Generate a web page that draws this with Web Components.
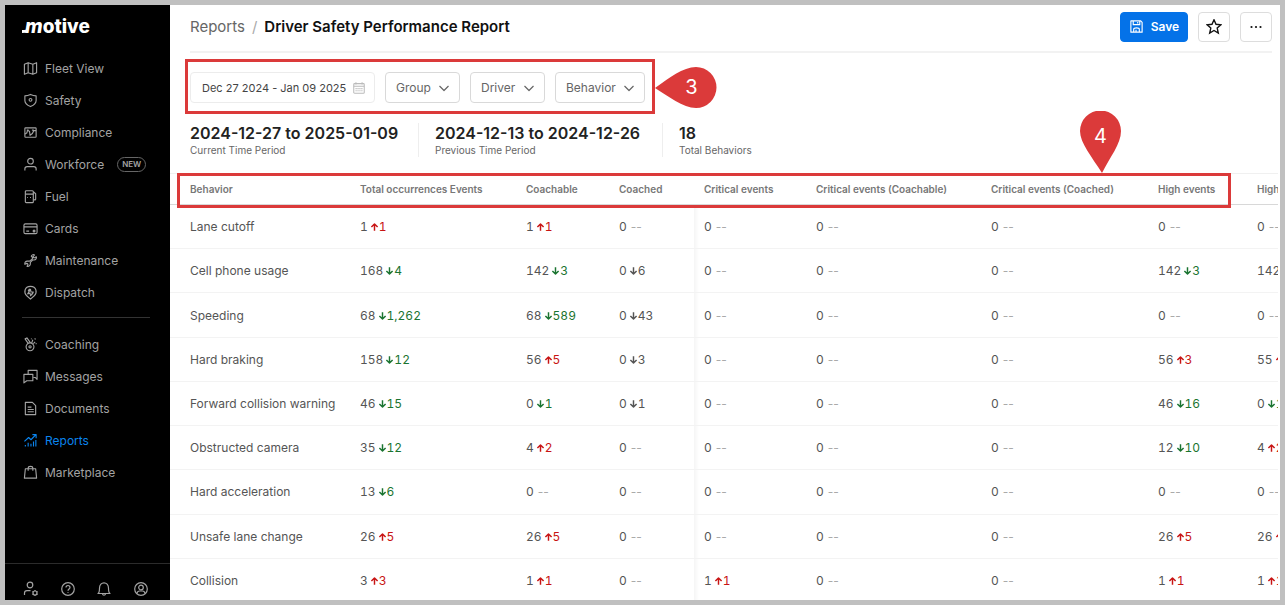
<!DOCTYPE html>
<html lang="en">
<head>
<meta charset="utf-8">
<title>Driver Safety Performance Report</title>
<style>
  html, body { height: 100%; }
  body { margin: 0; background: #c0c0c0; font-family: Inter, "Liberation Sans", sans-serif; color: #444; overflow: hidden; }
</style>
</head>
<body>
<report-app></report-app>
<script>
const ICONS = {
  map: '<path d="M1.5 3.5l4-1.700 5 1.700 4-1.700v10.700l-4 1.700-5-1.700-4 1.700zM5.500 1.800v10.700M10.500 3.500v10.700"/>',
  shield: '<path d="M8 1.500c2 1 4 1.500 6 1.500v5c0 3-2.500 5-6 6.500C4.500 13 2 11 2 8V3c2 0 4-.5 6-1.500z"/><circle cx="8" cy="7.300" r="1.500"/>',
  compliance: '<rect x="2" y="3" width="12" height="10" rx=".8"/><path d="M2 9.500l2-1 1-3 2 1.500 .5 4 2.500-2 1.500-3L14 6M4 5.500h2M9.500 5.500h2"/>',
  person: '<circle cx="8" cy="4.500" r="3"/><path d="M2 14.500v-2c0-1.500 1-2.300 2.500-2.300h7c1.500 0 2.500.8 2.500 2.300v2"/>',
  fuel: '<rect x="2.500" y="1.800" width="8.500" height="12.700" rx="1"/><path d="M2.500 5.500H11M4.500 9h.8M7.500 9h1M11 3l2.500 2v6c0 .8-1 1-1.300.5L11 11"/>',
  card: '<rect x="1" y="3" width="14" height="10.500" rx="1.500"/><path d="M1 6.300h14M3.500 10.800h3"/><circle cx="11.800" cy="10.600" r="1" fill="currentColor"/>',
  wrench: '<path d="M10 6.200V4.500L8.800 3.400C9.800 1.800 11.500 1.500 12.300 2L10.900 3.600l.2 1.300 1.300.2L14.200 4c.5 1.500-.5 3.500-2.500 3.500h-1.500L7.800 10v2c-.2 1.800-2 2.700-3.500 2.200l1-1.700-.4-1.200-1.400-.2-1.400 1C1.500 10 3 8.400 5 8.700h2z"/>',
  dispatch: '<path d="M8 15L4 11.500C.5 8 1.500 1.500 8 1.500S15.500 8 12 11.500z"/><path d="M5 9.500L8 4.500l.5 3h2.500l-3 4-.5-3zM5.500 6.500L7 4M9 11l2-3"/>',
  medal: '<circle cx="7.500" cy="10.500" r="4.200"/><circle cx="7.500" cy="10.500" r="1.200"/><path d="M5.500 6.800L2.200 2l2-1L8 6.200M9.200 6.500L10.500 3M11 7l2-1.800M12.500 1.500l.8 1.200M14.500 7h-1M9 1.500v1"/>',
  chat: '<path d="M5.500 5.500v-4h9.500v9.500l-2-2h-2"/><path d="M1 5.700h9.500v6.800H4L1 14.800z"/>',
  doc: '<path d="M2.500 1.500h7.500l3.500 3.500v9.500h-11zM5 6.500h4M5 9h6.500M5 11.500h6.500"/>',
  chart: '<path d="M1.500 9L6 4.800l2.500 2.400L13.500 2M10 1.700h4v4M2.500 14.500v-1.800M5.500 14.500v-4M8.500 14.500v-3M11.200 14.500V9M13.700 14.500V7.500"/>',
  bag: '<path d="M2.500 4h11l1 10h-13zM5.500 6V3.500c0-2.700 5-2.700 5 0V6"/>',
  usercog: '<circle cx="7" cy="4" r="2.800"/><path d="M1.500 14v-2c0-1.500 1-2.300 2.500-2.300h3.500"/><circle cx="12" cy="12" r="2"/><path d="M12 9v1M12 14v1M9.400 10.500l.9.500M13.700 13l.9.500M14.600 10.500l-.9.500M10.300 13l-.9.500"/>',
  help: '<circle cx="8" cy="8" r="6.300"/><path d="M6 6.500c0-2.800 4-2.500 4 0 0 1.500-2 1.500-2 3.200M8 11.300v.8"/>',
  bell: '<path d="M2 12.500c1.500-1 1.500-2.500 1.500-5.300 0-7.200 9-7.200 9 0 0 2.800 0 4.300 1.500 5.300zM6.500 13c.3 1.500 2.700 1.500 3 0"/>',
  account: '<circle cx="8" cy="8" r="6.300"/><circle cx="8" cy="6.500" r="2.300"/><path d="M4 12.500c.3-2 1.300-2.500 2.500-2.500h3c1.200 0 2.200.5 2.500 2.500"/>',
  save: '<path d="M2 2h10.500L14 3.500V14H2zM4.500 2v4h7V2M5 14v-3c0-2 6-2 6 0v3M9.300 3.200v1.500M7.500 11.500v2"/>',
  star: '<path stroke-width="1.400" stroke-linejoin="miter" d="M8 0.800l2 4.500 4.900.5-3.700 3.300 1.100 4.900L8 11.500l-4.300 2.500 1.100-4.900L1.100 5.800 6 5.300z"/>',
  more: '<g fill="currentColor" stroke="none"><circle cx="3.500" cy="8" r="1.100"/><circle cx="8" cy="8" r="1.100"/><circle cx="12.500" cy="8" r="1.100"/></g>',
  chevron: '<path d="M3.500 6l4.500 4.500L12.500 6"/>',
  calendar: '<rect x="2" y="3" width="12" height="11" rx="1"/><path d="M2 6h12M4.500 1.500V4M11.500 1.500V4"/><path d="M4 8.700h8M4 11.200h8" stroke-dasharray="1.400 .8"/>',
  up: '<path stroke-width="2.600" d="M8 14.500V3.500M2.500 8L8 2.500l5.500 5.500"/>',
  down: '<path stroke-width="2.600" d="M8 1.500v11M2.500 8L8 13.500l5.500-5.500"/>'
};

function define(name, css, html, setup) {
  const template = document.createElement('template');
  template.innerHTML = `<style>:host,*{box-sizing:border-box}${css}</style>${html}`;
  customElements.define(name, class extends HTMLElement {
    connectedCallback() {
      if (this.shadowRoot) return;
      const content = template.content.cloneNode(true);
      if (setup) setup(content, this);
      this.attachShadow({ mode: 'open' }).append(content);
    }
  });
}

define('app-icon',
  ':host{display:inline-block;width:16px;height:16px;flex:none}svg{display:block;width:100%;height:100%}',
  '<svg viewBox="0 0 16 16" fill="none" stroke="currentColor" stroke-width="1.2" stroke-linejoin="round" aria-hidden="true"></svg>',
  (root, el) => { root.querySelector('svg').innerHTML = ICONS[el.getAttribute('name')]; });

define('brand-logo',
  `:host{display:block;color:#fff}
   a{display:flex;align-items:baseline;color:inherit;text-decoration:none;font:800 19px/24px Inter,sans-serif}
   i{font-style:italic}
   svg{width:6px;height:4px;flex:none;margin-right:-3px}`,
  `<a href="#" aria-label="Motive"><svg viewBox="0 0 6 4"><path d="M0 1h2q2 0 4-1v3q-2 1-6 1z" fill="currentColor"/></svg><i>m</i><span>otive</span></a>`);

define('nav-item',
  `:host{display:block}
   a{display:flex;align-items:center;height:32px;gap:7px;padding:0 18px;color:#a3a3a3;font-size:12px;text-decoration:none}
   app-icon{width:15px;height:15px}
   :host([active]) a{color:#0a84ee}
   em{font:600 8px/13px Inter,sans-serif;border:1px solid #666;border-radius:8px;padding:0 4px;margin-left:6px}`,
  '<a href="#"><app-icon></app-icon><slot></slot></a>',
  (root, el) => {
    root.querySelector('app-icon').setAttribute('name', el.getAttribute('icon'));
    if (el.hasAttribute('badge')) {
      const badge = document.createElement('em');
      badge.textContent = el.getAttribute('badge');
      root.querySelector('a').append(badge);
    }
  });

define('side-bar',
  `:host{display:flex;flex-direction:column;background:#000;width:165px;flex:none;overflow:hidden}
   brand-logo{padding:10px 17px 13px}
   hr{border:0;border-top:1px solid #333;margin:9px 20px 10px 17px}
   footer{margin-top:auto;height:37px;flex:none;border-top:1px solid #2b2b2b;padding:17px 21px 0 18px;display:flex;justify-content:space-between}
   button{all:unset;box-sizing:border-box;width:16px;height:16px;color:#a3a3a3;cursor:pointer}`,
  `<brand-logo></brand-logo>
   <nav>
    <nav-item icon="map">Fleet View</nav-item><nav-item icon="shield">Safety</nav-item>
    <nav-item icon="compliance">Compliance</nav-item><nav-item icon="person" badge="NEW">Workforce</nav-item>
    <nav-item icon="fuel">Fuel</nav-item><nav-item icon="card">Cards</nav-item>
    <nav-item icon="wrench">Maintenance</nav-item><nav-item icon="dispatch">Dispatch</nav-item>
    <hr>
    <nav-item icon="medal">Coaching</nav-item><nav-item icon="chat">Messages</nav-item>
    <nav-item icon="doc">Documents</nav-item><nav-item icon="chart" active>Reports</nav-item>
    <nav-item icon="bag">Marketplace</nav-item>
   </nav>
   <footer>
    <button aria-label="Admin"><app-icon name="usercog"></app-icon></button>
    <button aria-label="Help"><app-icon name="help"></app-icon></button>
    <button aria-label="Notifications"><app-icon name="bell"></app-icon></button>
    <button aria-label="Account"><app-icon name="account"></app-icon></button>
   </footer>`);

define('page-header',
  `:host{display:flex;align-items:center;justify-content:space-between;height:48px;margin:0 8px 0 20px;padding-bottom:3px;border-bottom:2px solid #f2f2f2}
   h1{margin:0;font-size:15px;font-weight:400;display:flex;gap:7px;white-space:nowrap}
   a{color:#666;text-decoration:none}
   h1 span{color:#aaa}
   h1 b{color:#111;font-weight:600}
   div{display:flex;gap:10px}
   button{width:32px;height:30px;border:1px solid #ddd;border-radius:4px;background:#fff;color:#111;display:flex;align-items:center;justify-content:center;padding:0;gap:7px;font:600 12px Inter,sans-serif}
   .save{width:68px;background:#0472e8;border-color:#0472e8;color:#fff}
   .save app-icon{width:15px;height:15px}`,
  `<h1><a href="#">Reports</a><span>/</span><b>Driver Safety Performance Report</b></h1>
   <div><button class="save"><app-icon name="save"></app-icon>Save</button>
   <button aria-label="Favorite"><app-icon name="star"></app-icon></button>
   <button aria-label="More"><app-icon name="more"></app-icon></button></div>`);

define('filter-select',
  `:host{display:grid;height:31px;color:#666}
   select,app-icon{grid-area:1/1}
   select{appearance:none;border:1px solid #d9d9d9;border-radius:4px;background:#fff;color:inherit;font:12px Inter,sans-serif;padding:0 10px;width:100%}
   app-icon{align-self:center;justify-self:end;margin-right:8px;pointer-events:none}`,
  '<select><option></option></select><app-icon name="chevron"></app-icon>',
  (root, el) => {
    const label = el.getAttribute('label');
    root.querySelector('select').setAttribute('aria-label', label);
    root.querySelector('option').textContent = label;
  });

define('date-range',
  `:host{display:flex;align-items:center;height:31px;border:1px solid #ececec;border-radius:4px;padding:0 8px 0 11px}
   input{border:0;outline:0;padding:0;background:none;min-width:0;flex:1;font:11px Inter,sans-serif;color:#444}
   app-icon{width:14px;height:14px;color:#bbb}`,
  '<input type="text" aria-label="Date range" value="Dec 27 2024 - Jan 09 2025"><app-icon name="calendar"></app-icon>');

define('callout-pin',
  `:host{display:block;position:absolute;color:#fff;font-size:20px;width:41px;height:62px}
   svg{position:absolute;inset:0;width:100%;height:100%}
   span{position:absolute;inset:0 0 auto;line-height:50px;text-align:center}
   :host([point=left]){width:62px;height:41px}
   :host([point=left]) span{inset:0 10px 0 auto;width:31px;line-height:41px}`,
  '<svg aria-hidden="true"><path fill="#db3a3a"/></svg><span><slot></slot></span>',
  (root, el) => root.querySelector('path').setAttribute('d', el.getAttribute('point') === 'left'
    ? 'M0 21C14 11 28 0 41 0a20 20 0 0 1 0 41C28 41 13 29 0 21z'
    : 'M22 62C12 46 0 32 0 20a20 20 0 0 1 41 0C41 33 30 46 22 62z'));

define('filter-bar',
  `:host{display:flex;gap:10px;position:relative;padding:19px 20px 0}
   date-range{width:185px}
   .s{width:75px}.l{width:90px}
   .outline{position:absolute;left:15px;top:6px;width:470px;height:55px;border:3px solid #db3a3a;pointer-events:none}
   callout-pin{left:485px;top:14px}`,
  `<date-range></date-range><filter-select class="s" label="Group"></filter-select>
   <filter-select class="s" label="Driver"></filter-select><filter-select class="l" label="Behavior"></filter-select>
   <div class="outline"></div><callout-pin point="left">3</callout-pin>`);

define('stat-item',
  `:host{display:flex;flex-direction:column;width:244px;padding:0 16px;border-left:1px solid #eee;white-space:nowrap}
   :host(:first-child){border-left:0}
   b{font-size:16px;line-height:20px;font-weight:600;color:#222}
   span{font-size:10px;line-height:14px;color:#666}`,
  '<b><slot></slot></b><span></span>',
  (root, el) => { root.querySelector('span').textContent = el.getAttribute('label'); });

define('delta-value',
  `:host{white-space:nowrap;color:#555}
   .n,.d{font-variant-numeric:tabular-nums}
   .d{margin-left:2px}
   .flat{color:#aaa;margin-left:4px;font-variant-numeric:normal}
   .red{color:#c81414}.green{color:#1a7430}
   app-icon{width:9px;height:10px;vertical-align:-1px}`,
  '<span class="n"></span><span class="d"></span>',
  (root, el) => {
    const [n, dir, amount, tone] = el.getAttribute('value').split(' ');
    root.querySelector('.n').textContent = n;
    const d = root.querySelector('.d');
    if (!dir) { d.textContent = '--'; d.classList.add('flat'); return; }
    d.innerHTML = `<app-icon name="${dir}"></app-icon>`;
    d.append(amount);
    d.classList.add(tone || (dir === 'up' ? 'red' : 'green'));
  });

const COLUMNS = [
  ['Behavior', 180], ['Total occurrences Events', 166], ['Coachable', 93], ['Coached', 85],
  ['Critical events', 112], ['Critical events (Coachable)', 175], ['Critical events (Coached)', 167],
  ['High events', 99], ['High events (Coachable)', 160]
];
const ROWS = [
  ['Lane cutoff', '1 up 1', '1 up 1', '0', '0', '0', '0', '0', '0'],
  ['Cell phone usage', '168 down 4', '142 down 3', '0 down 6 gray', '0', '0', '0', '142 down 3', '142 down 3'],
  ['Speeding', '68 down 1,262', '68 down 589', '0 down 43 gray', '0', '0', '0', '0', '0'],
  ['Hard braking', '158 down 12', '56 up 5', '0 down 3 gray', '0', '0', '0', '56 up 3', '55 up 3'],
  ['Forward collision warning', '46 down 15', '0 down 1', '0 down 1 gray', '0', '0', '0', '46 down 16', '0 down 1'],
  ['Obstructed camera', '35 down 12', '4 up 2', '0', '0', '0', '0', '12 down 10', '4 up 2'],
  ['Hard acceleration', '13 down 6', '0', '0', '0', '0', '0', '0', '0'],
  ['Unsafe lane change', '26 up 5', '26 up 5', '0', '0', '0', '0', '26 up 5', '26 up 5'],
  ['Collision', '3 up 3', '1 up 1', '0', '1 up 1', '0', '0', '1 up 1', '1 up 1']
];

define('behavior-table',
  `:host{display:block;position:relative;flex:1;min-height:0}
   .scroll{height:100%;overflow:hidden;margin-right:2px}
   table{border-collapse:separate;border-spacing:0;table-layout:fixed;width:0;height:calc(100% + 3px)}
   th,td{padding:0 10px;text-align:left;white-space:nowrap;font-size:12px;font-weight:400;color:#555;border-bottom:1px solid #f3f3f3}
   th:first-child,td:first-child{padding-left:20px}
   thead th{height:32px;font-size:10px;font-weight:600;color:#777;border-top:1px solid #f0f0f0;border-bottom:1px solid #d8d8d8}
   tbody td:nth-child(5){background:linear-gradient(90deg,#f5f5f5,#fff 5px)}
   .outline{position:absolute;left:7px;right:49px;top:0;height:35px;border:3px solid #db3a3a;pointer-events:none}
   callout-pin{right:159px;top:-62px}`,
  '<div class="scroll"><table><colgroup></colgroup><thead><tr></tr></thead><tbody></tbody></table></div><div class="outline"></div><callout-pin>4</callout-pin>',
  root => {
    root.querySelector('colgroup').innerHTML = COLUMNS.map(c => `<col style="width:${c[1]}px">`).join('');
    root.querySelector('thead tr').innerHTML = COLUMNS.map(c => `<th scope="col">${c[0]}</th>`).join('');
    root.querySelector('tbody').innerHTML = ROWS.map(([name, ...cells]) =>
      `<tr><td>${name}</td>${cells.map(v => `<td><delta-value value="${v}"></delta-value></td>`).join('')}</tr>`).join('');
  });

define('report-app',
  `:host{display:flex;height:100vh;padding:5px}
   main{flex:1;min-width:0;background:#fff;display:flex;flex-direction:column}
   .stats{display:flex;padding:20px 4px 16px}`,
  `<side-bar></side-bar>
   <main>
    <page-header></page-header><filter-bar></filter-bar>
    <section class="stats">
     <stat-item label="Current Time Period">2024-12-27 to 2025-01-09</stat-item>
     <stat-item label="Previous Time Period">2024-12-13 to 2024-12-26</stat-item>
     <stat-item label="Total Behaviors">18</stat-item>
    </section>
    <behavior-table></behavior-table>
   </main>`);
</script>
</body>
</html>
